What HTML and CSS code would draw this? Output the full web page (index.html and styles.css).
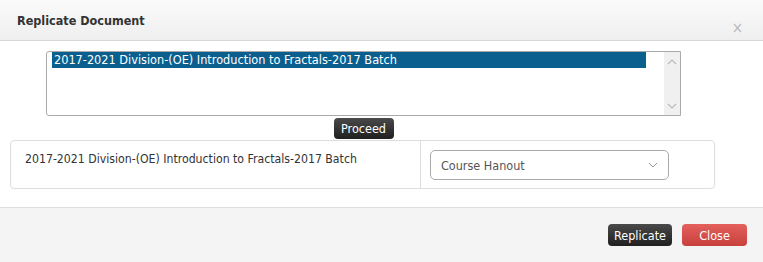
FILE: index.html
```html
<!DOCTYPE html>
<html lang="en">
<head>
    <meta charset="UTF-8">
    <title>Replicate Document</title>
    <link rel="stylesheet" href="styles.css">
</head>
<body>
    <div class="modal">
        <div class="modal-header">
            <h3>Replicate Document</h3>
            <span class="close-x">&times;</span>
        </div>

        <div class="modal-body">
            <div class="list-wrap">
                <div class="listbox">
                    <div class="options">
                        <div class="option selected">2017-2021 Division-(OE) Introduction to Fractals-2017 Batch</div>
                    </div>
                    <div class="scrollbar">
                        <svg width="10" height="6" viewBox="0 0 10 6"><path d="M1 5 L5 1 L9 5" fill="none" stroke="#bbb" stroke-width="1.2"/></svg>
                        <svg width="10" height="6" viewBox="0 0 10 6"><path d="M1 1 L5 5 L9 1" fill="none" stroke="#bbb" stroke-width="1.2"/></svg>
                    </div>
                </div>
                <button class="btn btn-dark btn-proceed">Proceed</button>
            </div>

            <div class="doc-row">
                <div class="doc-name">2017-2021 Division-(OE) Introduction to Fractals-2017 Batch</div>
                <div class="doc-type">
                    <div class="select-box">
                        <span>Course Hanout</span>
                        <svg width="10" height="6" viewBox="0 0 10 6"><path d="M1 1 L5 5 L9 1" fill="none" stroke="#999" stroke-width="1"/></svg>
                    </div>
                </div>
            </div>
        </div>

        <div class="modal-footer">
            <button class="btn btn-dark">Replicate</button>
            <button class="btn btn-red">Close</button>
        </div>
    </div>
</body>
</html>
```

FILE: styles.css
```css
* {
    box-sizing: border-box;
}
body {
    margin: 0;
    font-family: "DejaVu Sans Condensed", "DejaVu Sans", sans-serif;
    color: #333;
}
.modal {
    width: 763px;
    height: 262px;
    background-color: #fff;
    display: flex;
    flex-direction: column;
}
.modal-header {
    flex-shrink: 0;
    height: 41px;
    border-bottom: 1px solid #d8d8d8;
    background: linear-gradient(#fafafa, #efefef);
    display: flex;
    justify-content: space-between;
    align-items: center;
    padding: 0 20px 0 17px;
}
.modal-header h3 {
    margin: 0;
    font-size: 12.5px;
    font-weight: bold;
    color: #333;
}
.close-x {
    margin-top: 16px;
    font-size: 15px;
    color: #bbb;
}
.modal-body {
    flex-shrink: 0;
    padding: 10px 0 0 10px;
}
.list-wrap {
    width: 635px;
    margin-left: 36px;
    display: flex;
    flex-direction: column;
    align-items: center;
}
.listbox {
    width: 635px;
    height: 65px;
    border: 1px solid #aaa;
    border-radius: 3px 0 0 3px;
    display: flex;
}
.options {
    flex: 1;
    padding: 0 18px 0 5px;
}
.option {
    height: 16px;
    line-height: 16px;
    font-size: 12.6px;
    padding-left: 2px;
}
.option.selected {
    background-color: #0a5f8f;
    color: #fff;
}
.scrollbar {
    width: 16px;
    background-color: #f0f0f0;
    display: flex;
    flex-direction: column;
    justify-content: space-between;
    align-items: center;
    padding: 7px 0 6px;
}
.btn {
    font-family: inherit;
    font-size: 12.5px;
    color: #fff;
    border: none;
    border-radius: 4px;
    height: 22px;
    padding: 0;
    cursor: pointer;
}
.btn-dark {
    background: linear-gradient(#4a4a4a, #1f1f1f);
    width: 64px;
}
.btn-proceed {
    width: 60px;
    height: 21px;
    margin-top: 2px;
}
.btn-red {
    background: linear-gradient(#e3605d, #c8403c);
    width: 65px;
}
.doc-row {
    width: 705px;
    height: 49px;
    margin-top: 1px;
    border: 1px solid #ddd;
    border-radius: 4px;
    display: flex;
}
.doc-name {
    width: 410px;
    padding: 11px 0 0 14px;
    font-size: 12.2px;
    border-right: 1px solid #ddd;
}
.doc-type {
    flex: 1;
    padding: 9px 0 0 9px;
}
.select-box {
    width: 239px;
    height: 30px;
    border: 1px solid #aaa;
    border-radius: 5px;
    display: flex;
    justify-content: space-between;
    align-items: center;
    padding: 0 10px;
    font-size: 12.5px;
    color: #555;
}
.modal-footer {
    flex-shrink: 0;
    height: 55px;
    margin-top: 18px;
    border-top: 1px solid #ddd;
    background-color: #f4f4f4;
    display: flex;
    justify-content: flex-end;
    align-items: flex-start;
    gap: 10px;
    padding: 16px 16px 0 0;
}
```
